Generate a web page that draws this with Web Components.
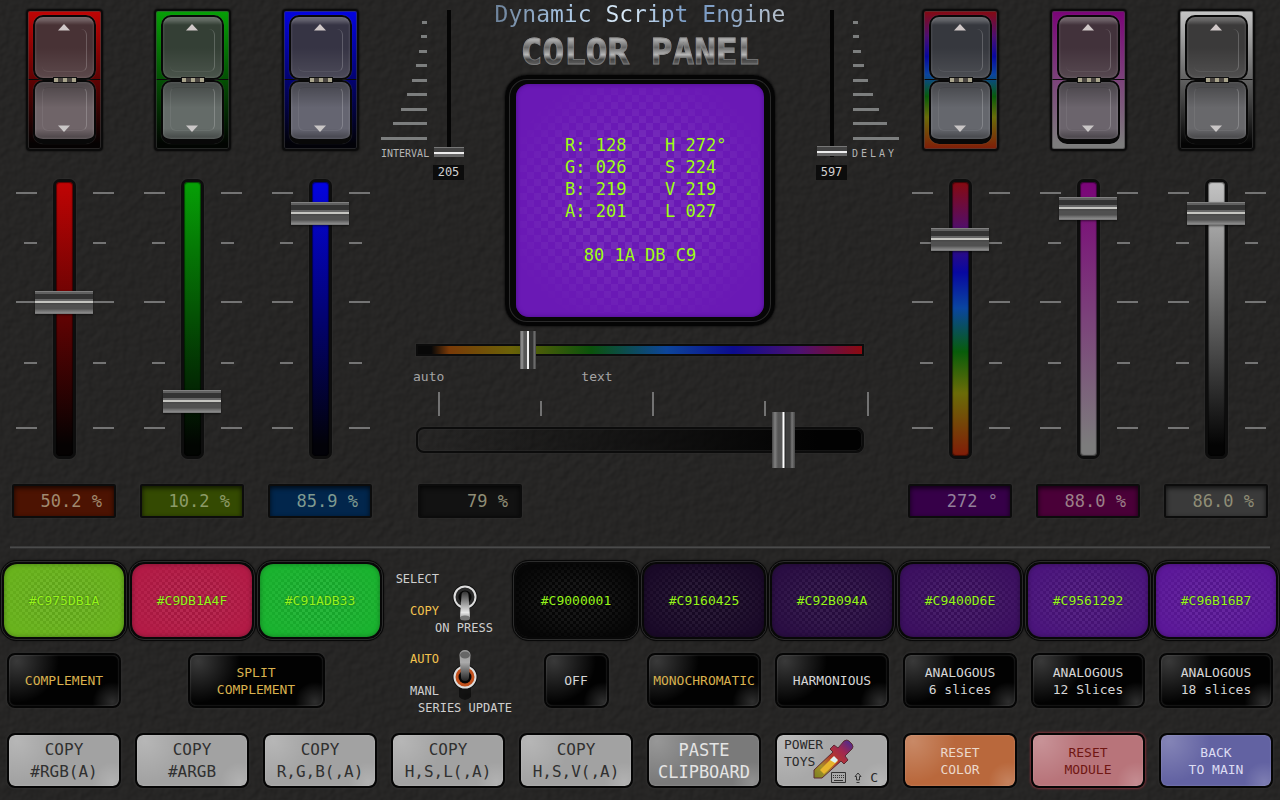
<!DOCTYPE html>
<html lang="en">
<head>
<meta charset="utf-8">
<title>Color Panel</title>
<style>
  body { margin: 0; background: #252423; font-family: "DejaVu Sans Mono", monospace; color: #d6d6d6; }
</style>
</head>
<body>
<color-panel></color-panel>
<script>
const define = (name, render) => customElements.define(name, class extends HTMLElement {
  connectedCallback() {
    if (this.shadowRoot) return;
    const root = this.attachShadow({ mode: "open" });
    root.innerHTML = render(this);
  }
});
const attr = (el, name, fallback = "") => el.getAttribute(name) ?? fallback;

/* Background leather grain */
define("grain-layer", () => `
  <style>
    :host { position: absolute; inset: 0; z-index: -1; overflow: hidden; }
    svg { display: block; width: 100%; height: 100%; }
  </style>
  <svg aria-hidden="true">
    <filter id="g" x="0" y="0" width="100%" height="100%" color-interpolation-filters="sRGB">
      <feTurbulence type="fractalNoise" baseFrequency="0.12" numOctaves="2" seed="7"/>
      <feDiffuseLighting surfaceScale="0.7" diffuseConstant="1" lighting-color="#2d2c2b">
        <feDistantLight azimuth="225" elevation="58"/>
      </feDiffuseLighting>
    </filter>
    <rect width="100%" height="100%" filter="url(#g)"/>
  </svg>`);

/* Two-key rocker */
define("rocker-switch", el => `
  <style>
    :host { display: block; box-sizing: border-box; width: 77px; height: 142px; border: 2px solid #0b0b0b; border-radius: 4px;
      box-shadow: inset 0 0 0 1px #4448, 0 0 2px #000; background: linear-gradient(#0a0a0a, #0a0a0a) 0 68px / 100% 1px no-repeat, var(--fill); padding: 4px 5px; }
    .well { position: relative; display: grid; grid-template-rows: 65px 64px; }
    button { appearance: none; border: 2px solid #080808; margin: 0; padding: 7px 0; display: flex; justify-content: center; border-radius: 10px; }
    .up { align-items: flex-start; background: linear-gradient(#ffffff38 0 3px, transparent 8px), linear-gradient(#0000 50%, #ffffff1c), color-mix(in srgb, var(--tint) 14%, #3a3838);
      box-shadow: inset 0 0 3px #fff3, 0 0 1px #fff4; }
    .down { align-items: flex-end; border-bottom-width: 5px; background: linear-gradient(#0005, transparent 45%), linear-gradient(#fff0 82%, #0004 96%), color-mix(in srgb, var(--tint) 8%, #6b6b6e);
      box-shadow: inset 0 0 3px #fff3, 0 0 1px #fff4; }
    .groove { position: absolute; left: 9px; right: 9px; border-radius: 6px; pointer-events: none; border: 1px solid #fff1; border-right-color: #fff3; }
    .g1 { top: 14px; height: 42px; border-top: 0; border-left: 0; } .g2 { top: 72px; height: 42px; border-top-color: #0001; }
    .hinge { position: absolute; top: 62px; left: 20px; width: 22px; height: 4px; border: 1px solid #111; background: repeating-linear-gradient(90deg, #a9a48c 0 4px, #4a4540 4px 9px); }
  </style>
  <div class="well">
    <button class="up" aria-label="${attr(el, "label")} up"><svg width="12" height="7"><path d="M6 0 12 6.500H0z" fill="#d0c8c8"/></svg></button>
    <button class="down" aria-label="${attr(el, "label")} down"><svg width="12" height="7"><path d="M6 7 12 .5H0z" fill="#c9c6c6"/></svg></button>
    <span class="groove g1"></span><span class="groove g2"></span><span class="hinge"></span>
  </div>`);

/* Numeric readout window */
define("value-readout", el => `
  <style>
    :host { display: block; box-sizing: border-box; width: 104px; height: 34px; border: 2px solid #0c0c0c; outline: 1px solid #3334; border-radius: 2px;
      background: var(--window, #121212); box-shadow: inset 0 2px 5px #000b; color: var(--ink, #8f8d76); }
    output { display: block; padding-right: 12px; text-align: right; font-size: 17px; line-height: 30px; white-space: pre; }
  </style>
  <output><slot></slot></output>`);

/* Vertical channel: rocker, fader and readout */
define("channel-strip", el => `
  <style>
    :host { display: flex; flex-direction: column; align-items: center; }
    .fader { display: grid; justify-items: center; margin: 28px 0 25px; height: 280px; width: 104px; }
    .fader > * { grid-area: 1 / 1; }
    .bar { box-sizing: border-box; width: 23px; height: 280px; border: 3px solid #0d0d0d; border-radius: 7px; background: var(--fill);
      box-shadow: 0 0 0 1px #3335, inset 0 0 1px 1px #0008; }
    input { appearance: none; writing-mode: vertical-lr; direction: rtl; width: 58px; height: 271px; margin: -12px 0 0; background: none; }
    input::-webkit-slider-runnable-track { background: none; }
    input::-webkit-slider-thumb { appearance: none; width: 58px; height: 23px;
      background: linear-gradient(#808080 0 1px, #606060 1px 3px, #333 3px 8px, #666 8px 10px, #c4c4c0 10px 12px, #484848 12px 13px, #505050 14px 18px, #666 19px, #8c8c8c 22px, #666); box-shadow: 0 1px 2px #0008; }
  </style>
  <rocker-switch label="${attr(el, "label")}"></rocker-switch>
  <div class="fader">
    <svg width="104" height="280" fill="#747474" aria-hidden="true">${
      [[14, 21], [64, 13], [123, 21], [184, 13], [249, 21]].map(([y, w]) =>
        `<rect x="${25 - w}" y="${y - 1}" width="${w}" height="2"/><rect x="81" y="${y - 1}" width="${w}" height="2"/>`).join("")
    }</svg>
    <div class="bar"></div>
    <input type="range" min="0" max="${attr(el, "max", 100)}" step="0.1" value="${attr(el, "value")}" aria-label="${attr(el, "label")}">
  </div>
  <value-readout><slot></slot></value-readout>`);

/* Small timing slider with a stepped ladder */
define("timing-slider", el => {
  const right = el.hasAttribute("flip");
  const bars = [5, 6, 8, 11, 15, 20, 26, 34, 46];
  return `
  <style>
    :host { display: flex; flex-direction: ${right ? "row-reverse" : "row"}; gap: 5px; width: 83px; padding-top: 10px; }
    .ladder { width: 47px; }
    svg { display: block; }
    label { display: block; font-size: 10px; line-height: 14px; color: #b4b4b4; ${right ? "letter-spacing: 3px;" : ""} }
    .slide { width: 31px; display: grid; justify-items: center; align-content: start; }
    input { appearance: none; writing-mode: vertical-lr; direction: rtl; width: 30px; height: 147px; margin: 0; background: linear-gradient(#050505, #050505) center / 4px 100% no-repeat; }
    input::-webkit-slider-thumb { appearance: none; width: 30px; height: 10px; background: linear-gradient(#777 0 1px, #444 1px 5px, #eee 5px 7px, #666 7px); }
    output { margin-top: 8px; width: 31px; font-size: 12px; line-height: 15px; text-align: center; background: #0c0c0c; color: #d0d0d0; }
  </style>
  <div class="ladder">
    <svg width="47" height="137" aria-hidden="true">${bars.map((w, i) =>
      `<rect x="${right ? 1 : 46 - w}" y="${11 + Math.round(i * 14.45)}" width="${w}" height="3" fill="#7c7e7e"/>`).join("")}</svg>
    <label for="s">${attr(el, "label")}</label>
  </div>
  <div class="slide">
    <input id="s" type="range" min="0" max="60000" value="${attr(el, "value")}">
    <output for="s">${attr(el, "value")}</output>
  </div>`;
});

/* Main colour display */
define("color-display", () => `
  <style>
    :host { display: block; box-sizing: border-box; width: 270px; height: 251px; padding: 9px 11px; border-radius: 22px; background: #070707;
      box-shadow: inset 0 0 0 4px #050505, inset 0 0 0 5px #2a2a2a, 0 0 3px #000; }
    .screen { position: relative; box-sizing: border-box; height: 233px; padding-top: 50px; border-radius: 13px; background: #6a19b5; box-shadow: inset 0 0 4px #4a0f88; color: #9dff12;
      font-size: 17px; line-height: 22px; }
    .screen::before { content: ""; position: absolute; inset: 4px; background: repeating-conic-gradient(#ffffff14 0 25%, #0000 0 50%) 0 0 / 14px 14px; mask: radial-gradient(closest-side, #000 50%, #0000 120%); }
    .grid { position: relative; display: grid; grid-template-columns: 100px 100px; padding-left: 49px; white-space: pre; }
    .hex { position: relative; margin-top: 22px; text-align: center; }
  </style>
  <div class="screen">
    <div class="grid"><span>R: 128</span><span>H 272°</span><span>G: 026</span><span>S 224</span><span>B: 219</span><span>V 219</span><span>A: 201</span><span>L 027</span></div>
    <div class="hex">80 1A DB C9</div>
  </div>`);

/* Horizontal sliders: text hue and alpha */
define("text-sliders", () => `
  <style>
    :host { display: block; width: 448px; }
    .row { display: grid; grid-template-columns: minmax(0, 1fr); align-items: center; }
    .row > * { grid-area: 1 / 1; }
    .hue { height: 38px; margin-top: 5px; }
    .track { box-sizing: border-box; height: 12px; border: 2px solid #0c0c0c; box-shadow: 0 0 0 1px #3334;
      background: linear-gradient(90deg, #080808 0 3%, #793a08 7%, #6b6208 21%, #0b520c 39%, #0d459a 56%, #0c0c8e 71%, #4d1170 86%, #8c0b10); }
    .alpha { height: 56px; margin-top: -4px; }
    .alpha .track { height: 26px; border-radius: 8px; background: linear-gradient(90deg, #0000, #020202 90%); box-shadow: 0 0 0 1px #3334, inset 0 0 0 1px #3336; }
    input { appearance: none; margin: 0; background: none; width: 100%; height: 38px; }
    .alpha input { height: 56px; margin-left: 12px; width: 459px; }
    input::-webkit-slider-thumb { appearance: none; width: 16px; height: 38px;
      background: linear-gradient(90deg, #555, #999 2px, #555 4px 7px, #eee 7px 9px, #333 9px 13px, #777 14px, #444); }
    .alpha input::-webkit-slider-thumb { width: 23px; height: 56px;
      background: linear-gradient(90deg, #444, #808080 3px, #555 6px 10px, #fff 11px 12px, #222 13px, #3c3c3c 14px 18px, #777 20px, #444); }
    .names { display: flex; gap: 137px; margin-left: -3px; font-size: 13px; line-height: 16px; color: #a4a4a4; }
    .ruler { display: block; margin-top: 7px; overflow: visible; }
  </style>
  <div class="row hue"><div class="track"></div><input id="hue" type="range" value="24" aria-label="Text hue"></div>
  <div class="names"><label for="hue">auto</label><span>text</span></div>
  <svg class="ruler" width="448" height="24" fill="#727272" aria-hidden="true">
    <rect x="22" width="2" height="24"/><rect x="124" y="9" width="2" height="15"/><rect x="236" width="2" height="24"/><rect x="348" y="9" width="2" height="15"/><rect x="451" width="2" height="24"/>
  </svg>
  <div class="row alpha"><div class="track"></div><input type="range" value="79" aria-label="Alpha"></div>`);

/* Clickable colour swatch */
define("color-swatch", el => `
  <style>
    :host { display: block; height: 81px; }
    button { position: relative; box-sizing: border-box; width: 100%; height: 81px; padding: 0; margin: 0; border: 4px solid #080808; border-radius: 17px; background: var(--c);
      background-clip: padding-box; box-shadow: inset 0 0 5px #0005, 0 0 2px #0008; color: #96f51a; font: 13px "DejaVu Sans Mono", monospace; }
    button::after { content: ""; position: absolute; inset: -3px; border: 1px solid #2c2c2c; border-radius: 15px; }
    button::before { content: ""; position: absolute; inset: 0; background: repeating-conic-gradient(#ffffff10 0 25%, #00000014 0 50%) 0 0 / 6px 6px; mask: radial-gradient(closest-side, #000 50%, #0000 120%); }
    span { position: relative; text-shadow: 0 0 2px #0008; }
  </style>
  <button><span><slot></slot></span></button>`);

/* Panel key; lines are passed in by the user */
define("panel-key", el => `
  <style>
    :host { display: block; width: 114px; height: 55px; justify-self: center; font-size: 13px; line-height: 17px; color: #d6d6d6; }
    button { box-sizing: border-box; position: relative; width: 100%; height: 55px; padding: 0; margin: 0; border: 2px solid #050505; border-radius: 8px; font: inherit; color: inherit; white-space: nowrap;
      background: radial-gradient(circle at 8px 6px, #ffffff38, #fff0 42px), radial-gradient(circle at 94% 92%, #ffffff2c, #fff0 20px), var(--face, #020202);
      background-clip: padding-box; box-shadow: inset 0 0 2px #fff4, 0 0 2px 1px var(--rim, #3a3a3a66); }
    ::slotted(b) { font-weight: inherit; display: block; }
  </style>
  <button aria-label="${el.textContent.trim().replace(/\s+/g, " ")}"><slot></slot></button>`);

/* Bat-handle toggle */
define("toggle-switch", el => {
  const down = el.hasAttribute("down");
  const pick = on => on ? ' class="on"' : "";
  return `
  <style>
    :host { display: block; height: 80px; font-size: 12px; line-height: 16px; color: #cfcfcf; }
    label { position: relative; display: grid; grid-template-columns: 55px 50px; }
    .names { display: grid; row-gap: 16px; text-align: right; }
    .on { color: #f3c34e; }
    input { appearance: none; margin: 0; grid-area: 1 / 2; }
    svg { grid-area: 1 / 2; overflow: visible; }
    .cap { grid-column: 1 / 3; padding-left: 34px; margin: 1px -21px 0 0; text-align: center; white-space: nowrap; }
  </style>
  <label>
    <span class="names"><span${pick(!down)}>${attr(el, "top")}</span><span${pick(down)}>${attr(el, "bottom")}</span></span>
    <input type="checkbox" ${down ? "checked" : ""}>
    <svg width="50" height="48" aria-hidden="true">
      <defs><linearGradient id="l" x2="0" y2="1">${down
        ? '<stop offset="0" stop-color="#333"/><stop offset=".75" stop-color="#e8e8e8"/><stop offset="1" stop-color="#888"/>'
        : '<stop offset="0" stop-color="#999"/><stop offset=".4" stop-color="#aaa"/><stop offset="1" stop-color="#222"/>'}</linearGradient></defs>
      ${down ? "" : '<path d="M20 34h12v12q-6 6-12 0z" fill="#0008"/>'}
      <circle cx="26" cy="26" r="12.500" fill="#111"/>
      <circle cx="26" cy="26" r="10.500" fill="${down ? "#2a2a2a" : "#c2501c"}" stroke="#ddd" stroke-width="2"/>
      <circle cx="26" cy="26" r="6.500" fill="#060606"/>
      ${down ? '<path d="M22.500 24a3.500 3.500 0 0 1 7 0L31 46q-5 5-10 0z" fill="url(#l)"/><ellipse cx="26" cy="47" rx="5" ry="2.500" fill="#777"/>'
             : '<path d="M20.500 4a5.500 5 0 0 1 11 0L30 26a4 4 0 0 1-8 0z" fill="url(#l)"/><ellipse cx="26" cy="4" rx="5" ry="3.500" fill="#666"/>'}
    </svg>
    <span class="cap">${attr(el, "caption")}</span>
  </label>`;
});

/* Contents of the shortcut key: name, dropper and key combination */
define("shortcut-face", () => `
  <style>
    :host { display: block; text-align: left; padding: 0 7px; height: 50px; }
    .name { display: block; line-height: 17px; }
    .drop { position: absolute; left: 35px; top: 4px; }
    .combo { position: absolute; right: 9px; bottom: 0; display: flex; align-items: center; gap: 8px; }
  </style>
  <span class="name">POWER<br>TOYS</span>
  <svg class="drop" width="42" height="42" viewBox="0 0 42 42" aria-hidden="true">
    <defs><linearGradient id="d" x1="0" y1="1" x2="1" y2="0"><stop offset="0" stop-color="#77801f"/><stop offset=".25" stop-color="#a8902a"/><stop offset=".5" stop-color="#b5382c"/><stop offset=".72" stop-color="#a02850"/><stop offset="1" stop-color="#3a2c9c"/></linearGradient></defs>
    <path d="M2 39V31L21 13l-3-3 4-4 4 3 6-7q3-2 5 0l3 3q2 3 0 5l-7 7 3 4-4 4-3-3L10 39z" fill="url(#d)" stroke="#5c2a34"/>
    <path d="M8 31 21 18l5 4L12 35z" fill="#e7b52c"/><path d="m18 21 4-4 4 4-3 3z" fill="#dff0f2"/>
  </svg>
  <span class="combo">
    <svg width="15" height="12" fill="none" stroke="#333" aria-hidden="true"><path d="M.5.5h14v10H.5z"/><path d="M2 3.500h11M2 5.500h11" stroke-dasharray="1 1"/><path d="M3 8.500h9"/></svg>
    <svg width="8" height="12" fill="none" stroke="#333" aria-hidden="true"><path d="M4 1 7 4.500H5.500V8h-3V4.500H1zM2.500 10.500h3"/></svg>
    <span>C</span>
  </span>`);

define("color-panel", () => `
  <style>
    :host { display: block; position: relative; z-index: 0; min-height: 100vh; overflow: hidden; }
    .top { display: grid; grid-template-columns: 3fr 4fr 3fr; }
    .bank { display: grid; grid-template-columns: repeat(3, 1fr); padding-top: 9px; }
    .mid { display: flex; flex-direction: column; align-items: center; min-width: 0; }
    .head { display: flex; justify-content: center; gap: 41px; width: 518px; }
    .main { width: 270px; display: flex; flex-direction: column; align-items: center; }
    h1, h2 { margin: 0; white-space: nowrap; -webkit-background-clip: text; background-clip: text; color: transparent; }
    h2 { font-size: 23px; line-height: 29px; font-weight: 400; background-image: linear-gradient(90deg, #6c8199, #a9c6e4 25%, #dcecf8 45%, #7196c4 68%, #b9c2cc); }
    h1 { font-size: 36px; line-height: 46px; padding-bottom: 0; font-weight: 700; -webkit-text-stroke: 1px #8a8a8aa0; background-image: linear-gradient(#aaa 24%, #666 40%, #b8b8b8 56%, #444 66%, #666 80%); }
    .mid value-readout { align-self: flex-start; margin: 16px 0 0 34px; }
    hr { height: 3px; margin: 28px 10px 11px; border: 0; background: linear-gradient(#333, #4a4a4a, #222); }
    .deck { display: grid; grid-template-columns: repeat(10, 1fr); grid-template-rows: 81px 54px 54px; row-gap: 12px; padding-bottom: 12px; }
    .toggles { grid-area: 1 / 4 / 3 / 5; padding-top: 11px; }
    .wide { grid-column: 2 / 4; width: 137px; }
    .off { grid-column: 5; width: 65px; }
    .amber { color: #d9b14e; }
    .third { margin-top: 14px; }
    .copy { --face: #a2a2a2; color: #303030; font-size: 16px; line-height: 22px; }
    .paste { --face: #7a7a7a; color: #e4e4e4; font-size: 17px; line-height: 22px; }
    .tool { --face: #a8a8a8; color: #2a2a2a; }
  </style>
  <grain-layer></grain-layer>
  <div class="top">
    <div class="bank">
      <channel-strip label="Red" value="50.2" style="--fill:linear-gradient(#c00404,#050202 96%);--tint:#a01020;--window:#4c1302;--ink:#a08a70">50.2 %</channel-strip>
      <channel-strip label="Green" value="10.2" style="--fill:linear-gradient(#06a006,#020502 96%);--tint:#106a20;--window:#344a02;--ink:#8c9a68">10.2 %</channel-strip>
      <channel-strip label="Blue" value="85.9" style="--fill:linear-gradient(#0404e0,#020208 96%);--tint:#1a1a90;--window:#02264c;--ink:#7f9a90">85.9 %</channel-strip>
    </div>
    <div class="mid">
      <div class="head">
        <timing-slider label="INTERVAL" value="205"></timing-slider>
        <div class="main">
          <h2>Dynamic Script Engine</h2>
          <h1>COLOR PANEL</h1>
          <color-display></color-display>
        </div>
        <timing-slider flip label="DELAY" value="597"></timing-slider>
      </div>
      <text-sliders></text-sliders>
      <value-readout>79 %</value-readout>
    </div>
    <div class="bank">
      <channel-strip label="Hue" max="360" value="272" style="--fill:linear-gradient(#860a10,#4d0e70 18%,#0808a0 33%,#0a45a0 46%,#085c0a 62%,#6a6c08 77%,#801c08);--tint:#203a60;--window:#360048;--ink:#93809a">272 °</channel-strip>
      <channel-strip label="Saturation" value="88" style="--fill:linear-gradient(#7a0478,#7c7c7c 96%);--tint:#701050;--window:#4a0038;--ink:#9c8088">88.0 %</channel-strip>
      <channel-strip label="Value" value="86" style="--fill:linear-gradient(#c4c4c4,#040404 96%);--tint:#444;--window:#3a3a3a;--ink:#8f8d76">86.0 %</channel-strip>
    </div>
  </div>
  <hr>
  <div class="deck">
    <color-swatch style="--c:#69b31d">#C975DB1A</color-swatch>
    <color-swatch style="--c:#b31b46">#C9DB1A4F</color-swatch>
    <color-swatch style="--c:#1ab32f">#C91ADB33</color-swatch>
    <div class="toggles">
      <toggle-switch down top="SELECT" bottom="COPY" caption="ON PRESS"></toggle-switch>
      <toggle-switch top="AUTO" bottom="MANL" caption="SERIES UPDATE"></toggle-switch>
    </div>
    <color-swatch style="--c:#070707">#C9000001</color-swatch>
    <color-swatch style="--c:#1a0a28">#C9160425</color-swatch>
    <color-swatch style="--c:#2a0e43">#C92B094A</color-swatch>
    <color-swatch style="--c:#3c1060">#C9400D6E</color-swatch>
    <color-swatch style="--c:#4b157c">#C9561292</color-swatch>
    <color-swatch style="--c:#5c1899">#C96B16B7</color-swatch>

    <panel-key class="amber">COMPLEMENT</panel-key>
    <panel-key class="amber wide"><b>SPLIT</b> <b>COMPLEMENT</b></panel-key>
    <panel-key class="off">OFF</panel-key>
    <panel-key class="amber">MONOCHROMATIC</panel-key>
    <panel-key>HARMONIOUS</panel-key>
    <panel-key><b>ANALOGOUS</b> <b>6 slices</b></panel-key>
    <panel-key><b>ANALOGOUS</b> <b>12 Slices</b></panel-key>
    <panel-key><b>ANALOGOUS</b> <b>18 slices</b></panel-key>

    <panel-key class="third copy"><b>COPY</b> <b>#RGB(A)</b></panel-key>
    <panel-key class="third copy"><b>COPY</b> <b>#ARGB</b></panel-key>
    <panel-key class="third copy"><b>COPY</b> <b>R,G,B(,A)</b></panel-key>
    <panel-key class="third copy"><b>COPY</b> <b>H,S,L(,A)</b></panel-key>
    <panel-key class="third copy"><b>COPY</b> <b>H,S,V(,A)</b></panel-key>
    <panel-key class="third paste"><b>PASTE</b> <b>CLIPBOARD</b></panel-key>
    <panel-key class="third tool"><shortcut-face></shortcut-face></panel-key>
    <panel-key class="third" style="--face:#b9683c;color:#ecd9cc"><b>RESET</b> <b>COLOR</b></panel-key>
    <panel-key class="third" style="--face:#b8747a;--rim:#7a3038;color:#701612"><b>RESET</b> <b>MODULE</b></panel-key>
    <panel-key class="third" style="--face:#6262a2;color:#dcdcf2"><b>BACK</b> <b>TO MAIN</b></panel-key>
  </div>`);
</script>
</body>
</html>
